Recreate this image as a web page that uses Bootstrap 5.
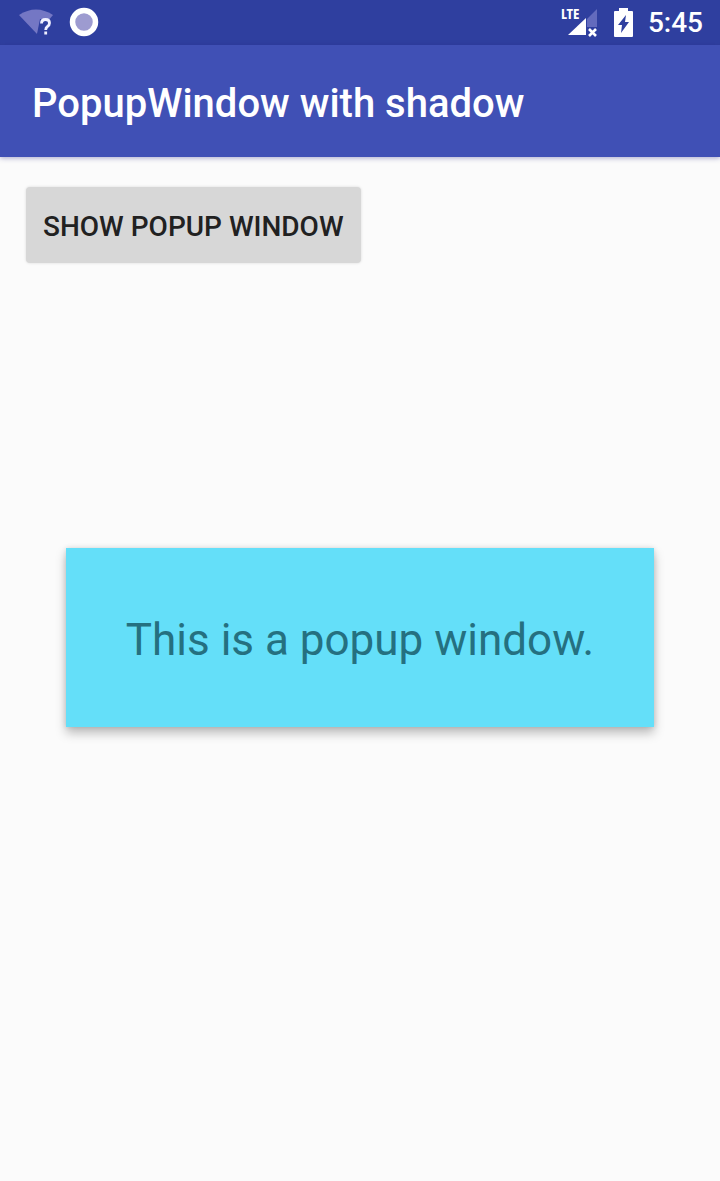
<!DOCTYPE html>
<html lang="en">
<head>
<meta charset="utf-8">
<meta name="viewport" content="width=device-width, initial-scale=1">
<title>PopupWindow with shadow</title>
<link href="https://cdn.jsdelivr.net/npm/bootstrap@5.3.0/dist/css/bootstrap.min.css" rel="stylesheet">
<style>
  body { background: #fbfbfb; font-family: Roboto, "Liberation Sans", sans-serif; }
  .status-bar { background: #2f3f9f; height: 45px; padding: 0 17px 2px 19px; }
  .status-icons { gap: 15px; }
  .clock { font-size: 28px; line-height: 32px; padding-top: 2px; }
  .app-bar { background: #4050b5; height: 112px; padding: 5px 32px 0; box-shadow: 0 1px 5px rgba(40, 40, 130, .4); }
  .app-title { font-size: 40px; line-height: 48px; }
  .content-area { padding: 30px 26px; }
  .btn-show { --bs-btn-bg: #d7d7d7; --bs-btn-color: #212121; --bs-btn-hover-bg: #cccccc; --bs-btn-active-bg: #c2c2c2;
    font-size: 28px; line-height: 36px; padding: 22px 17px 18px; border: 0; border-radius: 4px; box-shadow: 0 0 3px rgba(0, 0, 0, .14); }
  .popup-window { background: #64dff9; color: #257080; margin-top: 285px; padding: 64px 60px 59px; font-size: 44px; line-height: 56px;
    box-shadow: 0 6px 10px rgba(0, 0, 0, .26), 0 0 5px rgba(0, 0, 0, .12); }
</style>
</head>
<body>
<header>
  <div class="status-bar d-flex justify-content-between align-items-center text-white">
    <div class="d-flex align-items-center">
      <svg width="34" height="30" viewBox="0 0 34 30" aria-hidden="true">
        <path d="M0 8Q17 -3 34 8L18 27Z" fill="#7477c4"/>
        <path d="M21 12h13v16H22l-4-1z" fill="#2f3f9f"/>
        <path d="M22.500 16.500q0-4 4-4 4 0 4 3.500 0 2-2 3.500-1.800 1.200-1.800 3.500M26.700 24.500v3" fill="none" stroke="#f0f0ff" stroke-width="2.800"/>
      </svg>
      <svg class="ms-3" width="30" height="30" viewBox="0 0 30 30" aria-hidden="true">
        <circle cx="15" cy="15" r="11.500" fill="#9d9bd0" stroke="#fff" stroke-width="5.500"/>
      </svg>
    </div>
    <div class="status-icons d-flex align-items-center">
      <svg width="40" height="38" viewBox="0 0 40 38" aria-hidden="true">
        <path d="M38 6v18H28V16z" fill="#636bbd"/>
        <path d="M9 32L27 15v17z" fill="#fff"/>
        <path d="M30 26l7 7M37 26l-7 7" stroke="#fff" stroke-width="2.600"/>
        <text x="2" y="16" font-size="15" font-weight="700" font-family="Open Sans Condensed, Roboto Condensed, Roboto, sans-serif" fill="#fff">LTE</text>
      </svg>
      <svg width="19" height="32" viewBox="0 0 19 32" aria-hidden="true">
        <path d="M1 5h4V2h9v3h4q1 0 1 1v24q0 1-1 1H1q-1 0-1-1V6q0-1 1-1z" fill="#fff"/>
        <path d="M12 9L4 19h4l-1 8 8-11h-4z" fill="#2f3f9f"/>
      </svg>
      <span class="clock fw-medium">5:45</span>
    </div>
  </div>
  <div class="app-bar d-flex align-items-center text-white">
    <h1 class="app-title fw-medium m-0">PopupWindow with shadow</h1>
  </div>
</header>
<main class="content-area d-flex flex-column">
  <button type="button" class="btn btn-show fw-medium align-self-start text-uppercase">Show popup window</button>
  <div class="popup-window align-self-center text-center" role="dialog" aria-label="Popup">This is a popup window.</div>
</main>
<script src="https://cdn.jsdelivr.net/npm/bootstrap@5.3.0/dist/js/bootstrap.bundle.min.js"></script>
</body>
</html>
